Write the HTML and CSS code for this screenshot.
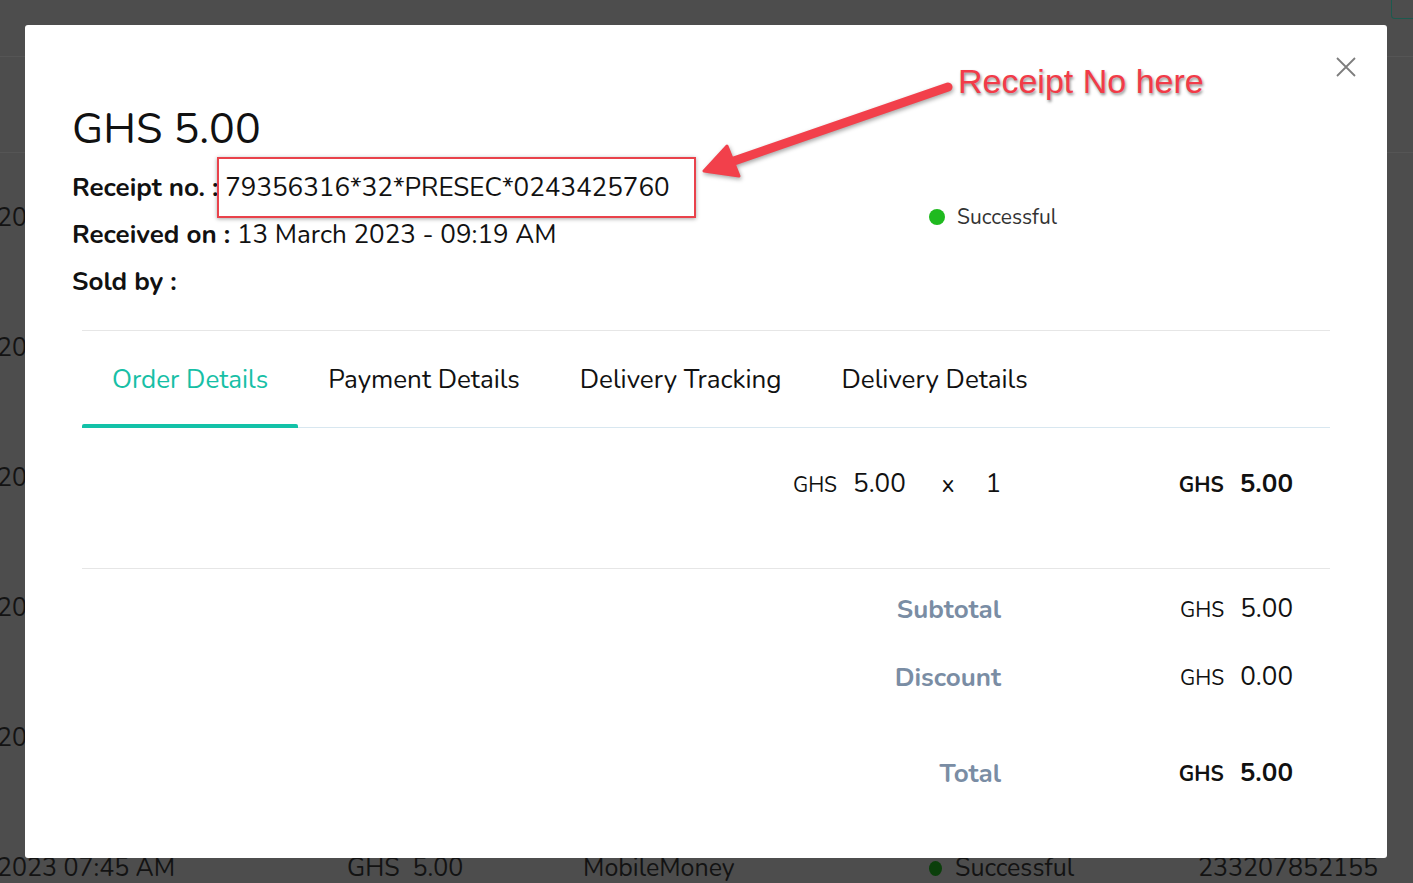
FILE: index.html
```html
<!DOCTYPE html>
<html lang="en">
<head>
<meta charset="utf-8">
<title>Order receipt</title>
<link rel="stylesheet" href="styles.css">
</head>
<body>
<div class="page">
  <div class="topbar"><span class="top-btn"></span></div>
  <div class="thead"></div>
  <div class="rows">
    <div class="row"><div class="c c-date">2023 09:19 AM</div><div class="c c-amt">GHS&nbsp; 5.00</div><div class="c c-method">MobileMoney</div><div class="c c-status"><i></i>Successful</div><div class="c c-phone">233243425760</div></div>
    <div class="row"><div class="c c-date">2023 08:52 AM</div><div class="c c-amt">GHS&nbsp; 5.00</div><div class="c c-method">MobileMoney</div><div class="c c-status"><i></i>Successful</div><div class="c c-phone">233244118230</div></div>
    <div class="row"><div class="c c-date">2023 08:30 AM</div><div class="c c-amt">GHS&nbsp; 5.00</div><div class="c c-method">MobileMoney</div><div class="c c-status"><i></i>Successful</div><div class="c c-phone">233205543871</div></div>
    <div class="row"><div class="c c-date">2023 08:11 AM</div><div class="c c-amt">GHS&nbsp; 5.00</div><div class="c c-method">MobileMoney</div><div class="c c-status"><i></i>Successful</div><div class="c c-phone">233542290113</div></div>
    <div class="row"><div class="c c-date">2023 07:58 AM</div><div class="c c-amt">GHS&nbsp; 5.00</div><div class="c c-method">MobileMoney</div><div class="c c-status"><i></i>Successful</div><div class="c c-phone">233277410926</div></div>
    <div class="row"><div class="c c-date">2023 07:45 AM</div><div class="c c-amt">GHS&nbsp; 5.00</div><div class="c c-method">MobileMoney</div><div class="c c-status"><i></i>Successful</div><div class="c c-phone">233207852155</div></div>
  </div>
</div>

<div class="modal">
  <button class="close" aria-label="Close">
    <svg width="20" height="20" viewBox="0 0 20 20"><path d="M1 1 L19 19 M19 1 L1 19" stroke="#7d7d7d" stroke-width="1.8" fill="none"/></svg>
  </button>

  <svg class="arrow" width="1000" height="200" viewBox="0 0 1000 200">
    <g class="arrow-g">
      <line x1="923" y1="62" x2="706" y2="137" stroke="#f2404b" stroke-width="9" stroke-linecap="round"/>
      <polygon points="679,146 702,121 714,151" fill="#f2404b" stroke="#f2404b" stroke-width="3" stroke-linejoin="round"/>
    </g>
  </svg>
  <div class="note">Receipt No here</div>

  <h1 class="amount">GHS 5.00</h1>
  <div class="meta">
    <div class="info">
      <div class="info-row"><b>Receipt no. :</b> <span class="rcpt">79356316*32*PRESEC*0243425760</span></div>
      <div class="info-row"><b>Received on :</b> 13 March 2023 - 09:19 AM</div>
      <div class="info-row"><b>Sold by :</b></div>
    </div>
    <div class="status"><i class="dot"></i>Successful</div>
  </div>

  <div class="body">
    <div class="tabs">
      <div class="tab active">Order Details</div>
      <div class="tab">Payment Details</div>
      <div class="tab">Delivery Tracking</div>
      <div class="tab">Delivery Details</div>
    </div>

    <div class="item">
      <div class="item-left">
        <span class="money"><span class="cur">GHS</span><span class="num">5.00</span></span>
        <span class="times">x</span>
        <span class="qty">1</span>
      </div>
      <div class="val strong"><span class="cur">GHS</span><span class="num">5.00</span></div>
    </div>

    <div class="summary">
      <div class="sum-row">
        <div class="label">Subtotal</div>
        <div class="val"><span class="cur">GHS</span><span class="num">5.00</span></div>
      </div>
      <div class="sum-row">
        <div class="label">Discount</div>
        <div class="val"><span class="cur">GHS</span><span class="num">0.00</span></div>
      </div>
      <div class="sum-row total">
        <div class="label">Total</div>
        <div class="val strong"><span class="cur">GHS</span><span class="num">5.00</span></div>
      </div>
    </div>
  </div>
</div>
</body>
</html>
```

FILE: styles.css
```css
* { box-sizing: border-box; }

html, body {
  margin: 0;
  padding: 0;
  height: 100%;
  overflow: hidden;
}

body {
  background: #4d4d4d;
  font-family: "Nunito", "Lato", "Open Sans", sans-serif;
  color: #111;
}

/* ---------- dimmed page behind the modal ---------- */
.page {
  width: 100%;
}

.topbar {
  height: 57px;
  border-bottom: 1px solid #555;
  display: flex;
  justify-content: flex-end;
}

.top-btn {
  width: 30px;
  height: 19px;
  margin-right: -8px;
  border: 1px solid #1c5a4f;
  border-top: 0;
  border-radius: 0 0 4px 4px;
}

.thead {
  height: 96px;
  border-bottom: 1px solid #555;
}

.row {
  display: flex;
  align-items: center;
  height: 130px;
  font-size: 25px;
  color: #131313;
  white-space: nowrap;
}

.c {
  flex: 0 0 auto;
}

.c-date {
  width: 172px;
  margin-left: -3px;
  margin-right: 3px;
}

.c-amt {
  width: 236px;
  margin-left: 175px;
}

.c-method {
  width: 346px;
}

.c-status {
  width: 269px;
  display: flex;
  align-items: center;
}

.c-status i {
  width: 13px;
  height: 15px;
  border-radius: 50%;
  background: #0b3f0b;
  margin-right: 13px;
}

/* ---------- modal ---------- */
.modal {
  position: absolute;
  left: 25px;
  top: 25px;
  width: 1362px;
  height: 833px;
  background: #fff;
  border-radius: 3px;
  padding: 0 47px;
}

.close {
  position: absolute;
  left: 1311px;
  top: 32px;
  width: 20px;
  height: 20px;
  padding: 0;
  border: 0;
  background: none;
}

.close svg { display: block; }

.arrow {
  position: absolute;
  left: 0;
  top: 0;
  pointer-events: none;
  overflow: visible;
}

.arrow-g {
  filter: drop-shadow(1px 2px 2px rgba(0, 0, 0, 0.35));
}

.note {
  position: absolute;
  left: 933px;
  top: 40px;
  font-family: "Liberation Sans", Arial, sans-serif;
  font-size: 34px;
  line-height: 32px;
  color: #f23b48;
  -webkit-text-stroke: 6px #fff;
  paint-order: stroke fill;
  text-shadow: 1px 2px 3px rgba(0, 0, 0, 0.45);
  white-space: nowrap;
}

.amount {
  margin: 80px 0 0;
  font-size: 43px;
  font-weight: 400;
  line-height: 48px;
  color: #111;
}

.meta {
  display: flex;
  margin-top: 11px;
}

.info {
  width: 857px;
}

.info-row {
  height: 47px;
  font-size: 26px;
  line-height: 47px;
  color: #111;
  white-space: nowrap;
}

.info-row b {
  font-weight: 700;
}

.rcpt {
  position: relative;
}

.rcpt::after {
  content: "";
  position: absolute;
  left: -8px;
  right: -26px;
  top: -13px;
  bottom: -13px;
  border: 2px solid #e9424b;
  box-shadow: 0 1px 4px rgba(0, 0, 0, 0.35);
}

.status {
  margin-top: 41px;
  height: 24px;
  display: flex;
  align-items: center;
  font-size: 21px;
  color: #333;
}

.dot {
  width: 16px;
  height: 16px;
  border-radius: 50%;
  background: #1fba1f;
  margin-right: 12px;
}

/* ---------- tabbed body ---------- */
.body {
  margin: 25px 10px 0;
}

.tabs {
  display: flex;
  height: 98px;
  border-top: 1px solid #e6e6e6;
  border-bottom: 1px solid #d8e7f0;
}

.tab {
  position: relative;
  display: flex;
  align-items: center;
  padding: 0 30px;
  font-size: 26px;
  color: #111;
  white-space: nowrap;
}

.tab.active {
  color: #17bfa6;
}

.tab.active::after {
  content: "";
  position: absolute;
  left: 0;
  right: 0;
  bottom: -1px;
  height: 4px;
  border-radius: 2px 2px 0 0;
  background: #13c2a8;
}

.item {
  display: grid;
  grid-template-columns: 1fr 292px;
  height: 141px;
  padding: 41px 37px 0 0;
  border-bottom: 1px solid #e6e6e6;
}

.item-left {
  display: flex;
  justify-content: flex-end;
  align-items: baseline;
  height: 30px;
  line-height: 30px;
}

.money {
  display: flex;
  align-items: baseline;
}

.cur {
  font-size: 21px;
  margin-right: 16px;
}

.num {
  font-size: 26px;
}

.times {
  font-size: 24px;
  margin-left: 36px;
}

.qty {
  font-size: 26px;
  margin-left: 31px;
}

.val {
  display: flex;
  justify-content: flex-end;
  align-items: baseline;
  height: 30px;
  line-height: 30px;
  color: #111;
}

.val.strong {
  font-weight: 700;
}

.summary {
  padding: 20px 37px 0 0;
}

.sum-row {
  display: grid;
  grid-template-columns: 1fr 292px;
  align-items: center;
  height: 40px;
  margin-bottom: 28px;
}

.sum-row.total {
  margin-top: 56px;
}

.label {
  text-align: right;
  font-size: 26px;
  font-weight: 700;
  color: #7a8da4;
}
```
